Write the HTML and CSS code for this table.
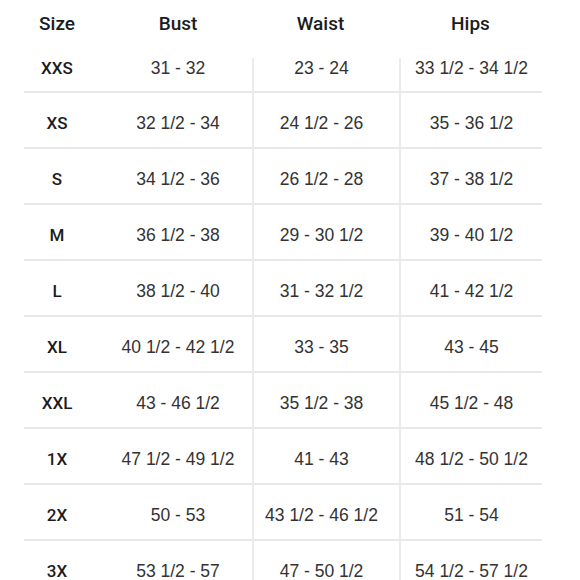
FILE: index.html
```html
<!DOCTYPE html>
<html lang="en">
<head>
<meta charset="utf-8">
<title>Size Chart</title>
<link rel="stylesheet" href="styles.css">
</head>
<body>
<div class="chart">
  <div class="head c1">Size</div>
  <div class="head c2">Bust</div>
  <div class="head c3">Waist</div>
  <div class="head c4">Hips</div>

  <div class="cell first c1 label">XXS</div>
  <div class="cell first c2">31 - 32</div>
  <div class="cell first c3 vl">23 - 24</div>
  <div class="cell first c4 vl">33 1/2 - 34 1/2</div>

  <div class="cell row c1 label">XS</div>
  <div class="cell row c2">32 1/2 - 34</div>
  <div class="cell row c3 vl">24 1/2 - 26</div>
  <div class="cell row c4 vl">35 - 36 1/2</div>

  <div class="cell row c1 label">S</div>
  <div class="cell row c2">34 1/2 - 36</div>
  <div class="cell row c3 vl">26 1/2 - 28</div>
  <div class="cell row c4 vl">37 - 38 1/2</div>

  <div class="cell row c1 label">M</div>
  <div class="cell row c2">36 1/2 - 38</div>
  <div class="cell row c3 vl">29 - 30 1/2</div>
  <div class="cell row c4 vl">39 - 40 1/2</div>

  <div class="cell row c1 label">L</div>
  <div class="cell row c2">38 1/2 - 40</div>
  <div class="cell row c3 vl">31 - 32 1/2</div>
  <div class="cell row c4 vl">41 - 42 1/2</div>

  <div class="cell row c1 label">XL</div>
  <div class="cell row c2">40 1/2 - 42 1/2</div>
  <div class="cell row c3 vl">33 - 35</div>
  <div class="cell row c4 vl">43 - 45</div>

  <div class="cell row c1 label">XXL</div>
  <div class="cell row c2">43 - 46 1/2</div>
  <div class="cell row c3 vl">35 1/2 - 38</div>
  <div class="cell row c4 vl">45 1/2 - 48</div>

  <div class="cell row c1 label">1X</div>
  <div class="cell row c2">47 1/2 - 49 1/2</div>
  <div class="cell row c3 vl">41 - 43</div>
  <div class="cell row c4 vl">48 1/2 - 50 1/2</div>

  <div class="cell row c1 label">2X</div>
  <div class="cell row c2">50 - 53</div>
  <div class="cell row c3 vl">43 1/2 - 46 1/2</div>
  <div class="cell row c4 vl">51 - 54</div>

  <div class="cell row c1 label">3X</div>
  <div class="cell row c2">53 1/2 - 57</div>
  <div class="cell row c3 vl">47 - 50 1/2</div>
  <div class="cell row c4 vl">54 1/2 - 57 1/2</div>
</div>
</body>
</html>
```
FILE: styles.css
```css
html, body {
  margin: 0;
  padding: 0;
  background: #ffffff;
}

body {
  width: 580px;
  height: 580px;
  overflow: hidden;
}

.chart {
  display: grid;
  grid-template-columns: 80px 148px 147px 143px;
  margin-left: 24px;
  font-family: "Liberation Sans", Arial, sans-serif;
  color: #333333;
}

.head {
  height: 46px;
  display: flex;
  align-items: center;
  justify-content: center;
  font-family: Roboto, "Liberation Sans", sans-serif;
  font-weight: 500;
  font-size: 19px;
  color: #1c1c1c;
}

.cell {
  display: flex;
  justify-content: center;
  font-size: 17.5px;
  line-height: 20px;
}

.first {
  margin-top: 12px;
  height: 33px;
  align-items: flex-start;
}

.row {
  border-top: 2px solid #e8e8e8;
  align-items: center;
  padding-top: 6px;
  box-sizing: content-box;
  height: 48px;
}

.c1 {
  padding-right: 14px;
}

.c3 {
  padding-right: 10px;
}

.vl {
  border-left: 2px solid #ebebeb;
}

.label {
  font-family: Roboto, "Liberation Sans", sans-serif;
  font-weight: 500;
  font-size: 17px;
  color: #1c1c1c;
}
```
